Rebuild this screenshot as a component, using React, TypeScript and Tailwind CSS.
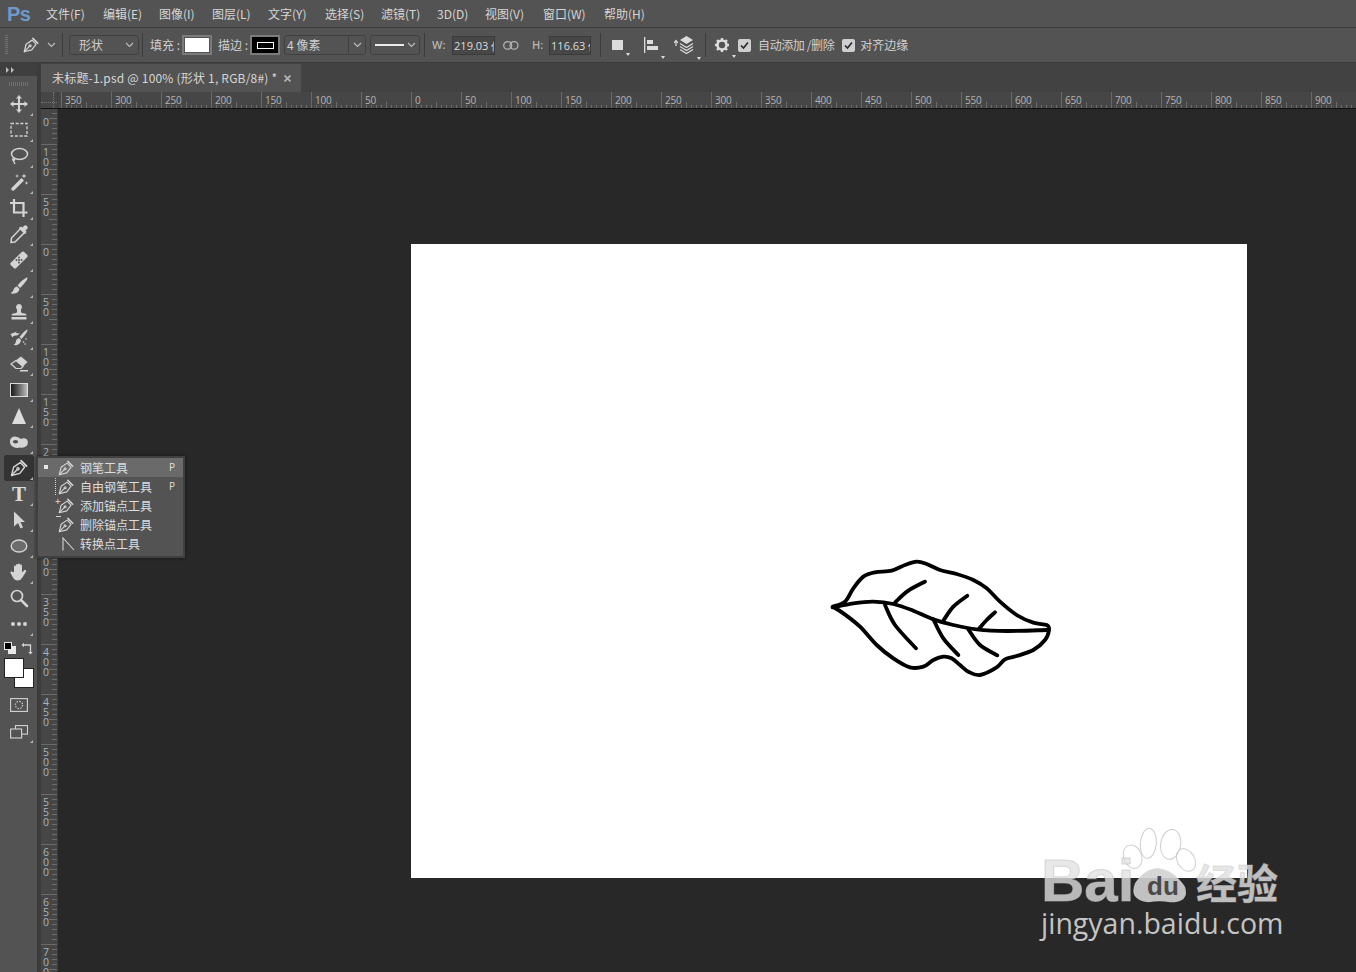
import React from "react";

const C = "#d4d4d4";
const FONT = { fontFamily: '"Noto Sans CJK SC","Noto Sans",sans-serif' };

function smooth(p: number[][]) {
  let d = `M${p[0][0]} ${p[0][1]}`;
  for (let i = 0; i < p.length - 1; i++) {
    const a = p[Math.max(i - 1, 0)], b = p[i], c = p[i + 1], e = p[Math.min(i + 2, p.length - 1)];
    d += ` C${b[0] + (c[0] - a[0]) / 6} ${b[1] + (c[1] - a[1]) / 6} ${c[0] - (e[0] - b[0]) / 6} ${c[1] - (e[1] - b[1]) / 6} ${c[0]} ${c[1]}`;
  }
  return d;
}

const outline = [[38,170],[75,155],[100,115],[130,80],[165,67],[215,62],[255,45],[290,35],[320,42],[360,60],[410,72],[460,90],[500,115],[540,155],[590,195],[640,218],[680,225],[687,240],[675,270],[640,300],[590,318],[555,328],[530,352],[480,375],[445,365],[420,345],[395,325],[370,320],[340,330],[310,350],[270,352],[220,325],[170,285],[120,230],[70,190],[38,170]];
const veins = [
  [[38,172],[100,160],[160,155],[220,162],[280,182],[340,208],[400,225],[470,238],[560,243],[680,240]],
  [[225,157],[265,122],[315,95]],
  [[370,212],[400,170],[442,137]],
  [[478,235],[500,210],[525,187]],
  [[195,165],[225,225],[288,295]],
  [[340,208],[370,265],[415,315]],
  [[445,238],[480,285],[532,316]],
];

function Leaf() {
  return (
    <svg width={240} height={135} viewBox="0 0 720 405" fill="none" stroke="#000" strokeWidth={11.5} strokeLinecap="round" strokeLinejoin="round" className="block">
      <path d={smooth(outline)} />
      {veins.map((v, i) => <path key={i} d={smooth(v)} />)}
    </svg>
  );
}

function Pen({ size = 20, color = C, w = 1.7 }: { size?: number; color?: string; w?: number }) {
  return (
    <svg width={size} height={size} viewBox="0 0 24 24" fill="none" stroke={color} strokeWidth={w} strokeLinejoin="round" strokeLinecap="round">
      <path d="M3 21 L5.5 11 L13.5 5.5 L18.8 10.8 L13 18.5 Z" />
      <path d="M14.5 3.2 L21 9.6" strokeWidth={w + 0.5} />
      <path d="M3.4 20.6 L9.6 14.2" />
      <circle cx="10.8" cy="13" r="1.3" />
    </svg>
  );
}

function S({ children, vb = "0 0 20 20" }: { children: React.ReactNode; vb?: string }) {
  return <svg width={20} height={20} viewBox={vb} fill={C} stroke="none">{children}</svg>;
}

const tools: { icon: React.ReactNode; tri?: boolean; active?: boolean }[] = [
  { tri: true, icon: <S><path d="M10 1 L13 4.500 H11 V9 H15.500 V7 L19 10 L15.500 13 V11 H11 V15.500 H13 L10 19 L7 15.500 H9 V11 H4.500 V13 L1 10 L4.500 7 V9 H9 V4.500 H7 Z" /></S> },
  { tri: true, icon: <S><rect x="2" y="3.500" width="16" height="12.500" fill="none" stroke={C} strokeWidth="1.300" strokeDasharray="3 1.700" /></S> },
  { tri: true, icon: <S><ellipse cx="10.500" cy="8" rx="8" ry="5.500" fill="none" stroke={C} strokeWidth="1.500" /><path d="M4 12 C3 15 5 15 5.500 14 C6 13 4.500 12.500 4.500 15 L6 18" fill="none" stroke={C} strokeWidth="1.300" /></S> },
  { tri: true, icon: <S><path d="M2.500 16 L12.500 6 L15 8.500 L5 18.500 Q3.500 19 2.500 18 Q2 17 2.500 16 Z" /><path d="M15 1.500 L15.700 3.300 L17.500 4 L15.700 4.700 L15 6.500 L14.300 4.700 L12.500 4 L14.300 3.300 Z M8 2 L8.500 3.500 L10 4 L8.500 4.500 L8 6 L7.500 4.500 L6 4 L7.500 3.500 Z M17.500 9 L18 10.500 L19.500 11 L18 11.500 L17.500 13 L17 11.500 L15.500 11 L17 10.500 Z" /></S> },
  { tri: true, icon: <S><path d="M5 1 V14.500 H18.500 M1 5 H14.500 V19" fill="none" stroke={C} strokeWidth="2.200" /></S> },
  { tri: true, icon: <S><path d="M12.500 3.500 L16.500 7.500 L6 18 L2 18.500 L2.500 14 Z" fill="none" stroke={C} strokeWidth="1.500" /><path d="M11 2.500 L13 4.500 L15 1.800 Q16.500 0.500 18 2 Q19.500 3.500 18.200 5 L15.500 7 L17.500 9 L15.500 10 L10 4.500 Z" /></S> },
  { tri: true, icon: <S><path d="M1.500 13 L13 1.800 Q14 1 15 1.800 L18.300 5 Q19 6 18.300 7 L7 18.300 Q6 19 5 18.300 L1.700 15 Q1 14 1.500 13 Z" /><g fill="#535353"><circle cx="10" cy="7.500" r="1" /><circle cx="12.500" cy="10" r="1" /><circle cx="7.500" cy="10" r="1" /><circle cx="10" cy="12.500" r="1" /><circle cx="10" cy="10" r="1" /></g></S> },
  { tri: true, icon: <S><path d="M18.500 1.500 Q19 3 14 9 L11 12 L8.500 9.500 L11.500 6 Q17 1 18.500 1.500 Z" /><path d="M8 10.500 L10.500 13 Q9.500 17 5.500 17.500 Q3 18 1.500 17 Q4 16 4.500 14 Q5 11 8 10.500 Z" /></S> },
  { tri: true, icon: <S><path d="M10 2 A3.200 3.200 0 0 1 12 7.500 L12 10 Q12 11 16 11.500 Q17.500 12 17.500 13.500 H2.500 Q2.500 12 4 11.500 Q8 11 8 10 L8 7.500 A3.200 3.200 0 0 1 10 2 Z" /><rect x="2.500" y="15" width="15" height="2.500" /></S> },
  { tri: true, icon: <S><path d="M18.500 1.500 Q19 3 15 8 L12.500 11 L10.500 9 L13 6 Q17 1.500 18.500 1.500 Z" /><path d="M10 10 L12 12 Q11.500 16 8 17 Q6 17.500 4.500 16.800 Q6.500 16 6.800 14 Q7 11 10 10 Z" /><path d="M1.500 6 L8 3.500 L6.500 5 L11 5.500 L8 7.500 Q4 7 3.500 9.500 Z" /><circle cx="14.500" cy="14" r=".8" /><circle cx="17" cy="11" r=".8" /><circle cx="16" cy="16" r=".8" /></S> },
  { tri: true, icon: <S><path d="M12 2.500 L18.500 8 L12 14.500 H7 L2 10 Z" fill={C} /><path d="M2 10 L7 14.500 H12 L14 12.500 L7 6.500 Z" fill="#535353" stroke={C} strokeWidth="1.200" /><rect x="11" y="16" width="8" height="1.500" /></S> },
  { tri: true, icon: <svg width={18} height={14} className="block border border-[#dcdcdc] bg-gradient-to-r from-[#1c1c1c] to-[#bdbdbd]" /> },
  { tri: true, icon: <S><path d="M10 2 L17 18 H3 Z" fill="#dcdcdc" /></S> },
  { tri: true, icon: <S><path d="M1 9 Q1.500 4.500 6 4.500 Q9 4.500 12 7 Q15 5.500 18 7.500 Q20 11 17.500 14 Q14.500 16.500 11 15.500 Q7.500 16.500 4.500 15 Q0.500 13 1 9 Z" /><ellipse cx="6.500" cy="9.800" rx="2.700" ry="1.800" fill="#535353" /></S> },
  { tri: true, active: true, icon: <Pen size={20} /> },
  { tri: true, icon: <span className="text-[21px] leading-none font-bold text-[#dcdcdc]" style={{ fontFamily: '"Liberation Serif",serif' }}>T</span> },
  { tri: true, icon: <S><path d="M5 1.500 L16 12 H11.500 L14 17.500 L11.500 18.500 L9 13 L5 16.500 Z" /></S> },
  { tri: true, icon: <S><ellipse cx="10" cy="10" rx="7.800" ry="6" fill="#6c6c6c" stroke={C} strokeWidth="1.400" /></S> },
  { tri: true, icon: <S><path d="M5 10 V4.500 A1 1 0 0 1 7 4.500 V9 V3 A1 1 0 0 1 9 3 V9 V2.500 A1 1 0 0 1 11 2.500 V9 V3.500 A1 1 0 0 1 13 3.500 V10.500 L15.500 8 A1.200 1.200 0 0 1 17.200 9.500 L13 16 Q11.500 18.500 8.500 18.500 Q5.500 18.500 4 15.500 L1.500 11 A1.100 1.100 0 0 1 3.500 10 Z" /></S> },
  { icon: <S><circle cx="8" cy="8" r="5.500" fill="none" stroke={C} strokeWidth="1.700" /><path d="M12 12 L18 18" stroke={C} strokeWidth="2.500" strokeLinecap="round" /></S> },
  { tri: true, icon: <S><circle cx="4" cy="10" r="2" /><circle cx="10" cy="10" r="2" /><circle cx="16" cy="10" r="2" /></S> },
];

function Toolbar() {
  return (
    <div className="w-[38px] shrink-0 flex flex-col bg-[#535353] border-r border-[#3b3b3b]">
      <div className="h-[13px] bg-[#3f3f3f] flex items-center pl-[6px] gap-px">
        <svg width={10} height={6} viewBox="0 0 10 6" fill="#bdbdbd"><path d="M0 0 L3 3 L0 6 Z M5 0 L8 3 L5 6 Z" /></svg>
      </div>
      <div className="h-[15px] flex justify-center items-center">
        <div className="w-[20px] h-[4px] bg-[repeating-linear-gradient(90deg,#6e6e6e_0,#6e6e6e_1px,transparent_1px,transparent_2px)]" />
      </div>
      {tools.map((t, i) => (
        <div key={i} className={`relative h-[26px] ml-[4px] mr-[3px] flex items-center justify-center ${t.active ? "bg-[#333333] rounded-[3px]" : ""}`}>
          {t.icon}
          {t.tri && <span className="absolute right-[1px] bottom-[1px] w-0 h-0 border-l-[3px] border-l-transparent border-b-[3px] border-b-[#b5b5b5]" />}
        </div>
      ))}
      <div className="h-[22px] flex items-center justify-between pl-[4px] pr-[3px]">
        <svg width={12} height={12} viewBox="0 0 12 12"><rect x="4" y="4" width="8" height="8" fill="#e8e8e8" /><rect x=".5" y=".5" width="7" height="7" fill="#000" stroke="#e8e8e8" /></svg>
        <svg width={13} height={13} viewBox="0 0 13 13" fill="none" stroke={C} strokeWidth="1.300"><path d="M2.500 3 H9.500 V10" /><path d="M0.500 3 L3 .8 V5.200 Z M9.500 12.500 L7.300 10 H11.700 Z" fill={C} stroke="none" /></svg>
      </div>
      <div className="h-[32px] pl-[4px] mt-[-1px]">
        <div className="relative w-[30px] h-[30px]">
          <div className="absolute right-0 bottom-0 w-[20px] h-[20px] bg-white border border-[#222]" />
          <div className="absolute left-0 top-0 w-[20px] h-[20px] bg-white border border-[#222]" />
        </div>
      </div>
      <div className="h-[28px] flex items-center justify-center mt-px">
        <svg width={18} height={14} viewBox="0 0 18 14" fill="none" stroke={C} strokeWidth="1.100"><rect x=".6" y=".6" width="16.800" height="12.800" /><circle cx="9" cy="7" r="3.600" strokeDasharray="1.500 1.300" /></svg>
      </div>
      <div className="relative h-[26px] flex items-center justify-center">
        <svg width={18} height={14} viewBox="0 0 18 14" fill="none" stroke={C} strokeWidth="1.100"><rect x="5.500" y=".6" width="12" height="8.500" /><rect x=".6" y="4" width="11" height="9" fill="#535353" /></svg>
        <span className="absolute right-[4px] bottom-[2px] w-0 h-0 border-l-[3px] border-l-transparent border-b-[3px] border-b-[#b5b5b5]" />
      </div>
    </div>
  );
}

const flyout: { label: string; p?: boolean; hi?: boolean; pre?: string; convert?: boolean }[] = [
  { label: "钢笔工具", p: true, hi: true },
  { label: "自由钢笔工具", p: true, pre: "free" },
  { label: "添加锚点工具", pre: "+" },
  { label: "删除锚点工具", pre: "-" },
  { label: "转换点工具", convert: true },
];

function Flyout() {
  return (
    <div className="absolute left-[36px] top-[456px] w-[149px] h-[102px] bg-[#535353] border-[2px] border-[#404040] shadow-[0_0_3px_rgba(0,0,0,.5)] z-20" style={FONT}>
      {flyout.map((f) => (
        <div key={f.label} className={`relative h-[19px] flex items-center text-[12px] text-[#dedede] ${f.hi ? "bg-[#6a6a6a]" : ""}`}>
          {f.hi && <span className="absolute left-[6px] top-[7px] w-[4px] h-[4px] bg-[#e6e6e6]" />}
          <span className="relative w-[42px] h-full flex items-center pl-[19px] shrink-0">
            {f.pre === "free" && <span className="absolute left-[17px] top-[1px] h-[17px] w-[5px] border-l border-dotted border-[#d4d4d4]" />}
            {f.pre === "+" && <span className="absolute left-[17px] top-0 text-[10px] leading-[10px]">+</span>}
            {f.pre === "-" && <span className="absolute left-[18px] top-[1px] w-[5px] h-px bg-[#d4d4d4]" />}
            {f.convert ? (
              <svg width={14} height={14} viewBox="0 0 14 14" fill="none" stroke={C} strokeWidth="1.100" className="ml-[4px]"><path d="M2 13.500 V1 L13 13" /></svg>
            ) : <Pen size={18} w={1.5} />}
          </span>
          <span className="leading-none">{f.label}</span>
          {f.p && <span className="absolute right-[8px] text-[10px]" style={{ fontFamily: '"Open Sans",sans-serif' }}>P</span>}
        </div>
      ))}
    </div>
  );
}

const MENUS = ["文件(F)", "编辑(E)", "图像(I)", "图层(L)", "文字(Y)", "选择(S)", "滤镜(T)", "3D(D)", "视图(V)", "窗口(W)", "帮助(H)"];
const MENU_W = [57, 56, 53, 56, 57, 56, 56, 48, 58, 61, 50];

function MenuBar() {
  return (
    <div className="h-[28px] bg-[#535353] flex items-center border-b border-[#3c3c3c]" style={FONT}>
      <div className="w-[46px] pl-[7px] text-[20px] font-bold text-[#6d9ac9] leading-none tracking-[-0.5px]" style={{ fontFamily: '"Liberation Sans",sans-serif' }}>Ps</div>
      {MENUS.map((m, i) => (
        <div key={m} className="text-[12px] text-[#d6d6d6] leading-none shrink-0" style={{ width: MENU_W[i] }}>{m}</div>
      ))}
    </div>
  );
}

const Sep = ({ ml, mr }: { ml: string; mr: string }) => <div className={`w-px h-[24px] bg-[#3c3c3c] shrink-0 ${ml} ${mr}`} />;
const Chev = () => <svg width={9} height={6} viewBox="0 0 9 6" fill="none" stroke="#bdbdbd" strokeWidth="1.100"><path d="M1 1 L4.500 4.500 L8 1" /></svg>;
const Tri = () => <span className="absolute right-[-7px] bottom-[-6px] w-0 h-0 border-l-[2.500px] border-r-[2.500px] border-l-transparent border-r-transparent border-t-[3px] border-t-[#dddddd]" />;
const Check = () => (
  <span className="w-[13px] h-[13px] bg-[#cfcfcf] rounded-[2px] flex items-center justify-center shrink-0">
    <svg width={9} height={9} viewBox="0 0 9 9" fill="none" stroke="#2c2c2c" strokeWidth="1.700"><path d="M1 4.500 L3.500 7 L8 1.500" /></svg>
  </span>
);

function OptionsBar() {
  const text = "text-[12px] text-[#d0d0d0] leading-none shrink-0";
  return (
    <div className="h-[35px] bg-[#535353] border-b border-[#3c3c3c] flex items-center" style={FONT}>
      <div className="w-[3px] h-[20px] ml-[5px] shrink-0 bg-[repeating-linear-gradient(180deg,#737373_0,#737373_1px,transparent_1px,transparent_2px)]" />
      <div className="ml-[14px] shrink-0"><Pen size={18} /></div>
      <div className="ml-[7px] shrink-0"><Chev /></div>
      <Sep ml="ml-[6px]" mr="mr-[6px]" />
      <div className={`w-[70px] h-[20px] border border-[#404040] rounded-[3px] flex items-center justify-between pl-[9px] pr-[4px] ${text}`}>形状<Chev /></div>
      <Sep ml="ml-[3px]" mr="mr-[7px]" />
      <span className={text}>填充 :</span>
      <div className="ml-[2px] w-[30px] h-[20px] border-[2px] border-[#7b7b7b] bg-[#535353] p-[1px] shrink-0"><div className="w-full h-full bg-white" /></div>
      <span className={`ml-[6px] ${text}`}>描边 :</span>
      <div className="ml-[2px] w-[30px] h-[20px] border-[2px] border-[#7b7b7b] bg-black flex items-center justify-center shrink-0"><div className="w-[17px] h-[7px] border border-white" /></div>
      <div className={`ml-[4px] w-[82px] h-[20px] border border-[#404040] rounded-[3px] flex items-center ${text}`}>
        <span className="pl-[2px] flex-1">4 像素</span>
        <span className="w-[17px] h-full border-l border-[#404040] flex items-center justify-center"><Chev /></span>
      </div>
      <div className="ml-[4px] w-[50px] h-[20px] border border-[#404040] rounded-[3px] flex items-center justify-between pl-[4px] pr-[3px] shrink-0">
        <div className="w-[29px] h-[2px] bg-[#ececec]" /><Chev />
      </div>
      <Sep ml="ml-[4px]" mr="mr-[7px]" />
      <span className="text-[11px] text-[#b5b5b5] font-semibold w-[20px] shrink-0" style={{ fontFamily: '"Open Sans",sans-serif' }}>W:</span>
      <div className="w-[43px] h-[19px] bg-[#474747] border border-[#3a3a3a] text-[11px] text-[#dedede] leading-[17px] pl-[1px] overflow-hidden whitespace-nowrap shrink-0" style={{ fontFamily: '"Open Sans",sans-serif' }}>219.03 像素</div>
      <div className="w-[37px] flex pl-[8px] shrink-0">
        <svg width={16} height={9} viewBox="0 0 16 9" fill="none" stroke="#b5b5b5" strokeWidth="1.200"><rect x=".7" y=".7" width="8" height="7.500" rx="3.700" /><rect x="7" y=".7" width="8" height="7.500" rx="3.700" /></svg>
      </div>
      <span className="text-[11px] text-[#b5b5b5] font-semibold w-[17px] shrink-0" style={{ fontFamily: '"Open Sans",sans-serif' }}>H:</span>
      <div className="w-[42px] h-[19px] bg-[#474747] border border-[#3a3a3a] text-[11px] text-[#dedede] leading-[17px] pl-[1px] overflow-hidden whitespace-nowrap shrink-0" style={{ fontFamily: '"Open Sans",sans-serif' }}>116.63 像素</div>
      <Sep ml="ml-[9px]" mr="mr-[11px]" />
      <div className="relative w-[11px] h-[10px] bg-[#dcdcdc] shrink-0"><Tri /></div>
      <div className="relative ml-[21px] w-[14px] h-[16px] shrink-0">
        <svg width={14} height={16} viewBox="0 0 14 16" fill="#dcdcdc"><rect x="0" y="0" width="1.300" height="16" /><rect x="3" y="3" width="6" height="4" /><rect x="3" y="9" width="11" height="4" /></svg>
        <Tri />
      </div>
      <div className="relative ml-[16px] w-[20px] h-[18px] shrink-0">
        <svg width={20} height={18} viewBox="0 0 20 18" fill="#dcdcdc"><path d="M2 5 V10 M0 7 L2 4.500 L4 7" stroke="#dcdcdc" fill="none" strokeWidth="1.200" /><path d="M12.500 0 L19 4 L12.500 8 L6 4 Z" /><path d="M6 7.500 L12.500 11.500 L19 7.500 M6 10.500 L12.500 14.500 L19 10.500 M6 13.500 L12.500 17.500 L19 13.500" fill="none" stroke="#dcdcdc" strokeWidth="1.200" /></svg>
        <Tri />
      </div>
      <Sep ml="ml-[11px]" mr="mr-[9px]" />
      <div className="relative w-[14px] h-[14px] shrink-0">
        <svg width={14} height={14} viewBox="0 0 14 14"><circle cx="7" cy="7" r="4.500" fill="none" stroke="#dcdcdc" strokeWidth="2.600" /><g stroke="#dcdcdc" strokeWidth="2.400"><path d="M7 0 V2.500 M7 11.500 V14 M0 7 H2.500 M11.500 7 H14 M2 2 L3.800 3.800 M10.200 10.200 L12 12 M12 2 L10.200 3.800 M3.800 10.200 L2 12" /></g></svg>
        <Tri />
      </div>
      <div className="ml-[9px]"><Check /></div>
      <span className={`ml-[7px] tracking-[-0.4px] ${text}`}>自动添加 /删除</span>
      <div className="ml-[8px]"><Check /></div>
      <span className={`ml-[5px] ${text}`}>对齐边缘</span>
    </div>
  );
}

const H_LABELS = [350,300,250,200,150,100,50,0,50,100,150,200,250,300,350,400,450,500,550,600,650,700,750,800,850,900];
const V_LABELS = [100,50,0,50,100,150,200,250,300,350,400,450,500,550,600,650,700];

function HCell({ n }: { n: number }) {
  return (
    <div className="relative w-[50px] h-full shrink-0 border-l border-[#6a6a6a]">
      <svg width={50} height={16} className="absolute left-0 top-0" stroke="#6c6c6c">
        {[5,10,15,20,25,30,35,40,45].map((x) => <line key={x} x1={x - 0.5} x2={x - 0.5} y1={x === 25 ? 10 : 13} y2={16} />)}
      </svg>
      <span className="absolute left-[3px] top-[3px] text-[10px] leading-[11px] tracking-[-0.2px] text-[#b4b4b4]" style={{ fontFamily: '"Open Sans",sans-serif' }}>{n}</span>
    </div>
  );
}

function VCell({ n, first }: { n?: number; first?: boolean }) {
  return (
    <div className={`relative w-full shrink-0 ${first ? "h-[35px]" : "h-[50px] border-t border-[#6a6a6a]"}`}>
      <svg width={17} height={50} className={`absolute left-0 ${first ? "top-[-15px]" : "top-0"}`} stroke="#6c6c6c">
        {[5,10,15,20,25,30,35,40,45].map((y) => (first && y < 20 ? null : <line key={y} y1={y - 0.5} y2={y - 0.5} x1={y === 25 ? 8 : 11} x2={17} />))}
      </svg>
      <span className={`absolute left-[1px] flex flex-col items-center w-[8px] text-[10.500px] leading-[10px] text-[#a9b4bd] ${first ? "top-[8px]" : "top-[2px]"}`} style={{ fontFamily: '"Open Sans",sans-serif' }}>
        {first ? <span>0</span> : String(n).split("").map((d, i) => <span key={i}>{d}</span>)}
      </span>
    </div>
  );
}

function Watermark() {
  return (
    <div className="absolute left-[1020px] top-[815px] w-[280px] h-[130px] z-10 pointer-events-none">
      <svg width={280} height={130} viewBox="0 0 840 390" className="absolute inset-0" fill="none" stroke="rgba(190,190,190,.75)" strokeWidth="3">
        <ellipse cx="385" cy="85" rx="24" ry="45" transform="rotate(5 385 85)" fill="rgba(255,255,255,.45)" />
        <ellipse cx="452" cy="88" rx="30" ry="45" transform="rotate(8 452 88)" fill="rgba(255,255,255,.45)" />
        <ellipse cx="338" cy="125" rx="27" ry="36" transform="rotate(-20 338 125)" fill="rgba(255,255,255,.45)" />
        <ellipse cx="498" cy="135" rx="26" ry="36" transform="rotate(-30 498 135)" fill="rgba(255,255,255,.45)" />
        <path d="M345 205 Q375 160 415 160 Q460 165 495 215 Q510 262 450 262 Q420 255 385 262 Q325 255 345 205 Z" fill="rgba(210,210,210,.9)" stroke="none" />
      </svg>
      <span className="absolute left-[21px] top-[36px] text-[60px] font-bold leading-none text-[rgba(225,225,225,.78)] [-webkit-text-stroke:1px_rgba(190,190,190,.55)]" style={{ fontFamily: '"Liberation Sans",sans-serif' }}>Bai</span>
      <span className="absolute left-[127px] top-[58px] text-[26px] font-bold leading-none text-[#4a4a4a]" style={{ fontFamily: '"Liberation Sans",sans-serif' }}>du</span>
      <span className="absolute left-[176px] top-[46px] text-[41px] font-bold leading-none text-[rgba(225,225,225,.82)] [-webkit-text-stroke:1px_rgba(190,190,190,.4)]" style={FONT}>经验</span>
      <span className="absolute left-[21px] top-[94px] text-[28.500px] leading-none text-[rgba(225,225,225,.85)] whitespace-nowrap" style={{ fontFamily: '"Open Sans",sans-serif' }}>jingyan.baidu.com</span>
    </div>
  );
}

export default function App() {
  return (
    <div className="relative w-[1356px] h-[972px] overflow-hidden bg-[#282828] flex flex-col">
      <MenuBar />
      <OptionsBar />
      <div className="flex-1 flex min-h-0">
        <Toolbar />
        <div className="w-[3px] bg-[#3c3c3c] shrink-0" />
        <div className="flex-1 flex flex-col min-w-0">
          <div className="h-[29px] bg-[#424242] flex shrink-0">
            <div className="w-[260px] h-[28px] mt-px bg-[#535353] flex items-center pl-[11px] text-[12px] text-[#d6d6d6] whitespace-nowrap" style={FONT}>
              <span className="w-[232px] shrink-0 tracking-[0.2px]">未标题-1.psd @ 100% (形状 1, RGB/8#) *</span>
              <svg width={7} height={7} viewBox="0 0 7 7" stroke="#b0b0b0" strokeWidth="1.800"><path d="M.5 .5 L6.500 6.500 M6.500 .5 L.5 6.500" /></svg>
            </div>
          </div>
          <div className="h-[17px] bg-[#464646] border-b border-[#111] flex shrink-0 overflow-hidden">
            <div className="relative w-[17px] shrink-0 border-r border-[#3c3c3c]">
              <div className="absolute left-0 right-0 top-[10px] border-t border-dotted border-[#777]" />
              <div className="absolute top-0 bottom-0 left-[12px] border-l border-dotted border-[#777]" />
            </div>
            <div className="w-[3px] shrink-0" />
            {H_LABELS.map((n, i) => <HCell key={i} n={n} />)}
          </div>
          <div className="flex-1 flex min-h-0">
            <div className="w-[17px] shrink-0 bg-[#464646] border-r border-[#3a3a3a] overflow-hidden">
              <VCell first />
              {V_LABELS.map((n, i) => <VCell key={i} n={n} />)}
            </div>
            <div className="flex-1 pl-[353px] pt-[135px] bg-[#282828]">
              <div className="w-[836px] h-[634px] bg-white overflow-hidden pl-[409px] pt-[306px]">
                <Leaf />
              </div>
            </div>
          </div>
        </div>
      </div>
      <Flyout />
      <Watermark />
    </div>
  );
}
